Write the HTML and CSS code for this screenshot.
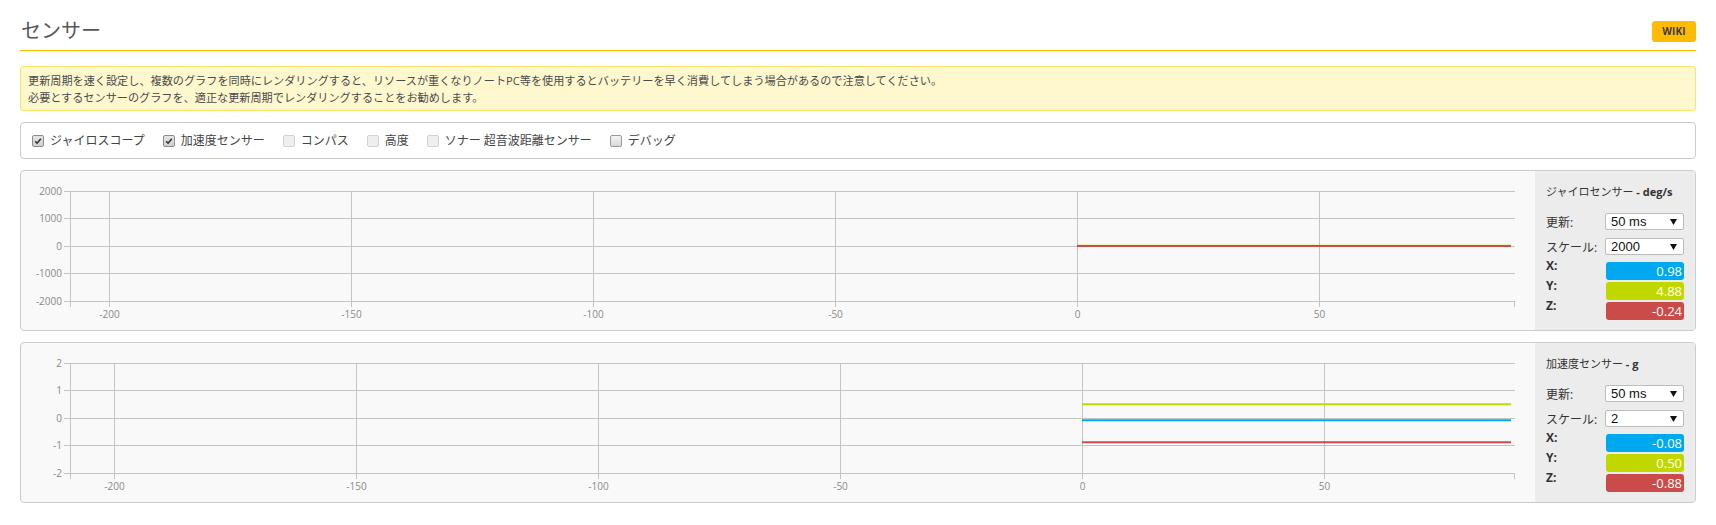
FILE: index.html
```html
<!DOCTYPE html>
<html lang="ja">
<head>
<meta charset="utf-8">
<title>センサー</title>
<link rel="stylesheet" href="styles.css">
</head>
<body>
<div class="tab">
  <div class="tab-header">
    <h1 class="tab-title">センサー</h1>
    <a class="wiki-btn">WIKI</a>
  </div>

  <div class="note">更新周期を速く設定し、複数のグラフを同時にレンダリングすると、リソースが重くなりノートPC等を使用するとバッテリーを早く消費してしまう場合があるので注意してください。<br>必要とするセンサーのグラフを、適正な更新周期でレンダリングすることをお勧めします。</div>

  <div class="toggles">
    <label class="toggle"><span class="cb checked"><svg viewBox="0 0 12 12"><path d="M2.6 6.2L4.9 8.6L9.4 3.2"/></svg></span><span class="tlabel">ジャイロスコープ</span></label>
    <label class="toggle"><span class="cb checked"><svg viewBox="0 0 12 12"><path d="M2.6 6.2L4.9 8.6L9.4 3.2"/></svg></span><span class="tlabel">加速度センサー</span></label>
    <label class="toggle"><span class="cb disabled"></span><span class="tlabel">コンパス</span></label>
    <label class="toggle"><span class="cb disabled"></span><span class="tlabel">高度</span></label>
    <label class="toggle"><span class="cb disabled"></span><span class="tlabel">ソナー 超音波距離センサー</span></label>
    <label class="toggle"><span class="cb"></span><span class="tlabel">デバッグ</span></label>
  </div>

  <div class="graph">
    <svg class="plot" width="1514" height="159" viewBox="0 0 1514 159">
      <g class="grid">
        <path d="M43 20.5H1493.5M43 47.5H1493.5M43 75.5H1493.5M43 102.5H1493.5M43 130.5H1493.5"/>
        <path d="M88.5 20V136M330.5 20V136M572.5 20V136M814.5 20V136M1056.5 20V136M1298.5 20V136"/>
        <path d="M49.5 20V136M1493.5 130V136"/>
      </g>
      <g class="ylabels">
        <text x="41" y="24">2000</text>
        <text x="41" y="51">1000</text>
        <text x="41" y="79">0</text>
        <text x="41" y="106">-1000</text>
        <text x="41" y="134">-2000</text>
      </g>
      <g class="xlabels">
        <text x="88.5" y="147">-200</text>
        <text x="330.5" y="147">-150</text>
        <text x="572.5" y="147">-100</text>
        <text x="814.5" y="147">-50</text>
        <text x="1056.5" y="147">0</text>
        <text x="1298.5" y="147">50</text>
      </g>
      <g class="data">
        <path class="lx" d="M1056 75H1490"/>
        <path class="ly" d="M1056 74.7H1490"/>
        <path class="lz" d="M1056 75.1H1490"/>
      </g>
    </svg>
    <div class="control">
      <div class="ctitle">ジャイロセンサー <b>- deg/s</b></div>
      <div class="crow"><span class="clabel">更新:</span><span class="select">50 ms<svg class="arrow" viewBox="0 0 7 6"><path d="M0 0H7L3.5 6Z"/></svg></span></div>
      <div class="crow"><span class="clabel">スケール:</span><span class="select">2000<svg class="arrow" viewBox="0 0 7 6"><path d="M0 0H7L3.5 6Z"/></svg></span></div>
      <div class="vals">
        <div class="vrow"><span class="vlabel">X:</span><span class="bar bx">0.98</span></div>
        <div class="vrow"><span class="vlabel">Y:</span><span class="bar by">4.88</span></div>
        <div class="vrow"><span class="vlabel">Z:</span><span class="bar bz">-0.24</span></div>
      </div>
    </div>
  </div>

  <div class="graph">
    <svg class="plot" width="1514" height="159" viewBox="0 0 1514 159">
      <g class="grid">
        <path d="M43 20.5H1493.5M43 47.5H1493.5M43 75.5H1493.5M43 102.5H1493.5M43 130.5H1493.5"/>
        <path d="M93.5 20V136M335.5 20V136M577.5 20V136M819.5 20V136M1061.5 20V136M1303.5 20V136"/>
        <path d="M49.5 20V136M1493.5 130V136"/>
      </g>
      <g class="ylabels">
        <text x="41" y="24">2</text>
        <text x="41" y="51">1</text>
        <text x="41" y="79">0</text>
        <text x="41" y="106">-1</text>
        <text x="41" y="134">-2</text>
      </g>
      <g class="xlabels">
        <text x="93.5" y="147">-200</text>
        <text x="335.5" y="147">-150</text>
        <text x="577.5" y="147">-100</text>
        <text x="819.5" y="147">-50</text>
        <text x="1061.5" y="147">0</text>
        <text x="1303.5" y="147">50</text>
      </g>
      <g class="data">
        <path class="lx" d="M1061 77.2H1490"/>
        <path class="ly" d="M1061 61.3H1490"/>
        <path class="lz" d="M1061 99.2H1490"/>
      </g>
    </svg>
    <div class="control">
      <div class="ctitle">加速度センサー <b>- g</b></div>
      <div class="crow"><span class="clabel">更新:</span><span class="select">50 ms<svg class="arrow" viewBox="0 0 7 6"><path d="M0 0H7L3.5 6Z"/></svg></span></div>
      <div class="crow"><span class="clabel">スケール:</span><span class="select">2<svg class="arrow" viewBox="0 0 7 6"><path d="M0 0H7L3.5 6Z"/></svg></span></div>
      <div class="vals">
        <div class="vrow"><span class="vlabel">X:</span><span class="bar bx">-0.08</span></div>
        <div class="vrow"><span class="vlabel">Y:</span><span class="bar by">0.50</span></div>
        <div class="vrow"><span class="vlabel">Z:</span><span class="bar bz">-0.88</span></div>
      </div>
    </div>
  </div>
</div>
</body>
</html>
```

FILE: styles.css
```css
* { box-sizing: border-box; }

html, body {
  margin: 0;
  padding: 0;
  background: #ffffff;
}

body {
  font-family: "Open Sans", "Noto Sans CJK JP", sans-serif;
  color: #333333;
  font-size: 12px;
}

.tab {
  padding: 0 20px;
}

.tab-header {
  height: 51px;
  padding-top: 12px;
  display: flex;
  align-items: center;
  justify-content: space-between;
  border-bottom: 1px solid #ffbb00;
}

.tab-title {
  margin: 0;
  font-size: 20px;
  line-height: 24px;
  font-weight: 400;
  color: #555555;
  padding-left: 1px;
}

.wiki-btn {
  display: flex;
  align-items: center;
  justify-content: center;
  width: 44px;
  height: 21px;
  background: #ffbb00;
  border-radius: 3px;
  color: #3a3a3a;
  font-size: 10px;
  font-weight: 700;
  letter-spacing: 0.2px;
}

.note {
  margin-top: 15px;
  background: #fff8cf;
  border: 1px solid #ffe36b;
  border-radius: 3px;
  padding: 5px 7px 4px;
  font-size: 11.15px;
  line-height: 17px;
  color: #4a4a4a;
}

.toggles {
  margin-top: 11px;
  height: 37px;
  border: 1px solid #cccccc;
  border-radius: 4px;
  background: #ffffff;
  display: flex;
  align-items: center;
  padding-left: 11px;
}

.toggle {
  display: flex;
  align-items: center;
  margin-right: 18px;
}

.cb {
  width: 12px;
  height: 12px;
  border: 1px solid #9a9a9a;
  border-radius: 2px;
  background: linear-gradient(#f4f4f4, #d9d9d9);
  display: flex;
  align-items: center;
  justify-content: center;
}

.cb svg {
  width: 10px;
  height: 10px;
}

.cb svg path {
  fill: none;
  stroke: #2e2e2e;
  stroke-width: 1.8;
}

.cb.checked {
  background: linear-gradient(#e6e6e6, #cfcfcf);
  border-color: #8c8c8c;
}

.cb.disabled {
  background: #eeeeee;
  border-color: #d2d2d2;
}

.tlabel {
  margin-left: 6px;
  font-size: 12px;
  line-height: 16px;
  color: #444444;
}

.graph {
  margin-top: 11px;
  height: 161px;
  border: 1px solid #cccccc;
  border-radius: 4px;
  background: #f9f9f9;
  display: flex;
  overflow: hidden;
}

.plot {
  display: block;
  flex: none;
}

.grid path {
  fill: none;
  stroke: #c4c4c4;
  stroke-width: 1;
  shape-rendering: crispEdges;
}

.ylabels text,
.xlabels text {
  font-family: "Open Sans", sans-serif;
  font-size: 10px;
  fill: #8a8a8a;
}

.ylabels text { text-anchor: end; }
.xlabels text { text-anchor: middle; }

.data path {
  fill: none;
  stroke-width: 2;
}

.lx { stroke: #00a8f0; }
.ly { stroke: #c0d800; }
.lz { stroke: #cb4b4b; }

.control {
  flex: 1;
  background: #ececec;
  padding: 14px 11px 0 11px;
  display: flex;
  flex-direction: column;
}

.ctitle {
  height: 14px;
  line-height: 14px;
  font-size: 11px;
  color: #333333;
  white-space: nowrap;
}

.ctitle b {
  font-weight: 700;
}

.crow {
  display: flex;
  align-items: center;
  height: 17px;
  margin-top: 8px;
}

.ctitle + .crow {
  margin-top: 14px;
}

.clabel {
  width: 59px;
  font-size: 12px;
  color: #333333;
  white-space: nowrap;
}

.select {
  width: 79px;
  height: 17px;
  background: #ffffff;
  border: 1px solid #bcbcbc;
  border-radius: 2px;
  display: flex;
  align-items: center;
  justify-content: space-between;
  padding: 0 6px 0 5px;
  font-family: "Liberation Sans", sans-serif;
  font-size: 13px;
  color: #111111;
}

.arrow {
  width: 7px;
  height: 6px;
  fill: #111111;
}

.vals {
  margin-top: 7px;
  display: flex;
  flex-direction: column;
  gap: 2px;
}

.vrow {
  display: flex;
  align-items: flex-start;
  height: 18px;
}

.vlabel {
  width: 60px;
  font-size: 12px;
  font-weight: 700;
  line-height: 14px;
  margin-top: -3px;
  color: #333333;
}

.bar {
  width: 78px;
  height: 18px;
  border-radius: 3px;
  color: #ffffff;
  font-size: 13px;
  line-height: 18px;
  text-align: right;
  padding-right: 2px;
}

.bx { background: #00a8f0; }
.by { background: #c0d800; }
.bz { background: #cb4b4b; }
```
